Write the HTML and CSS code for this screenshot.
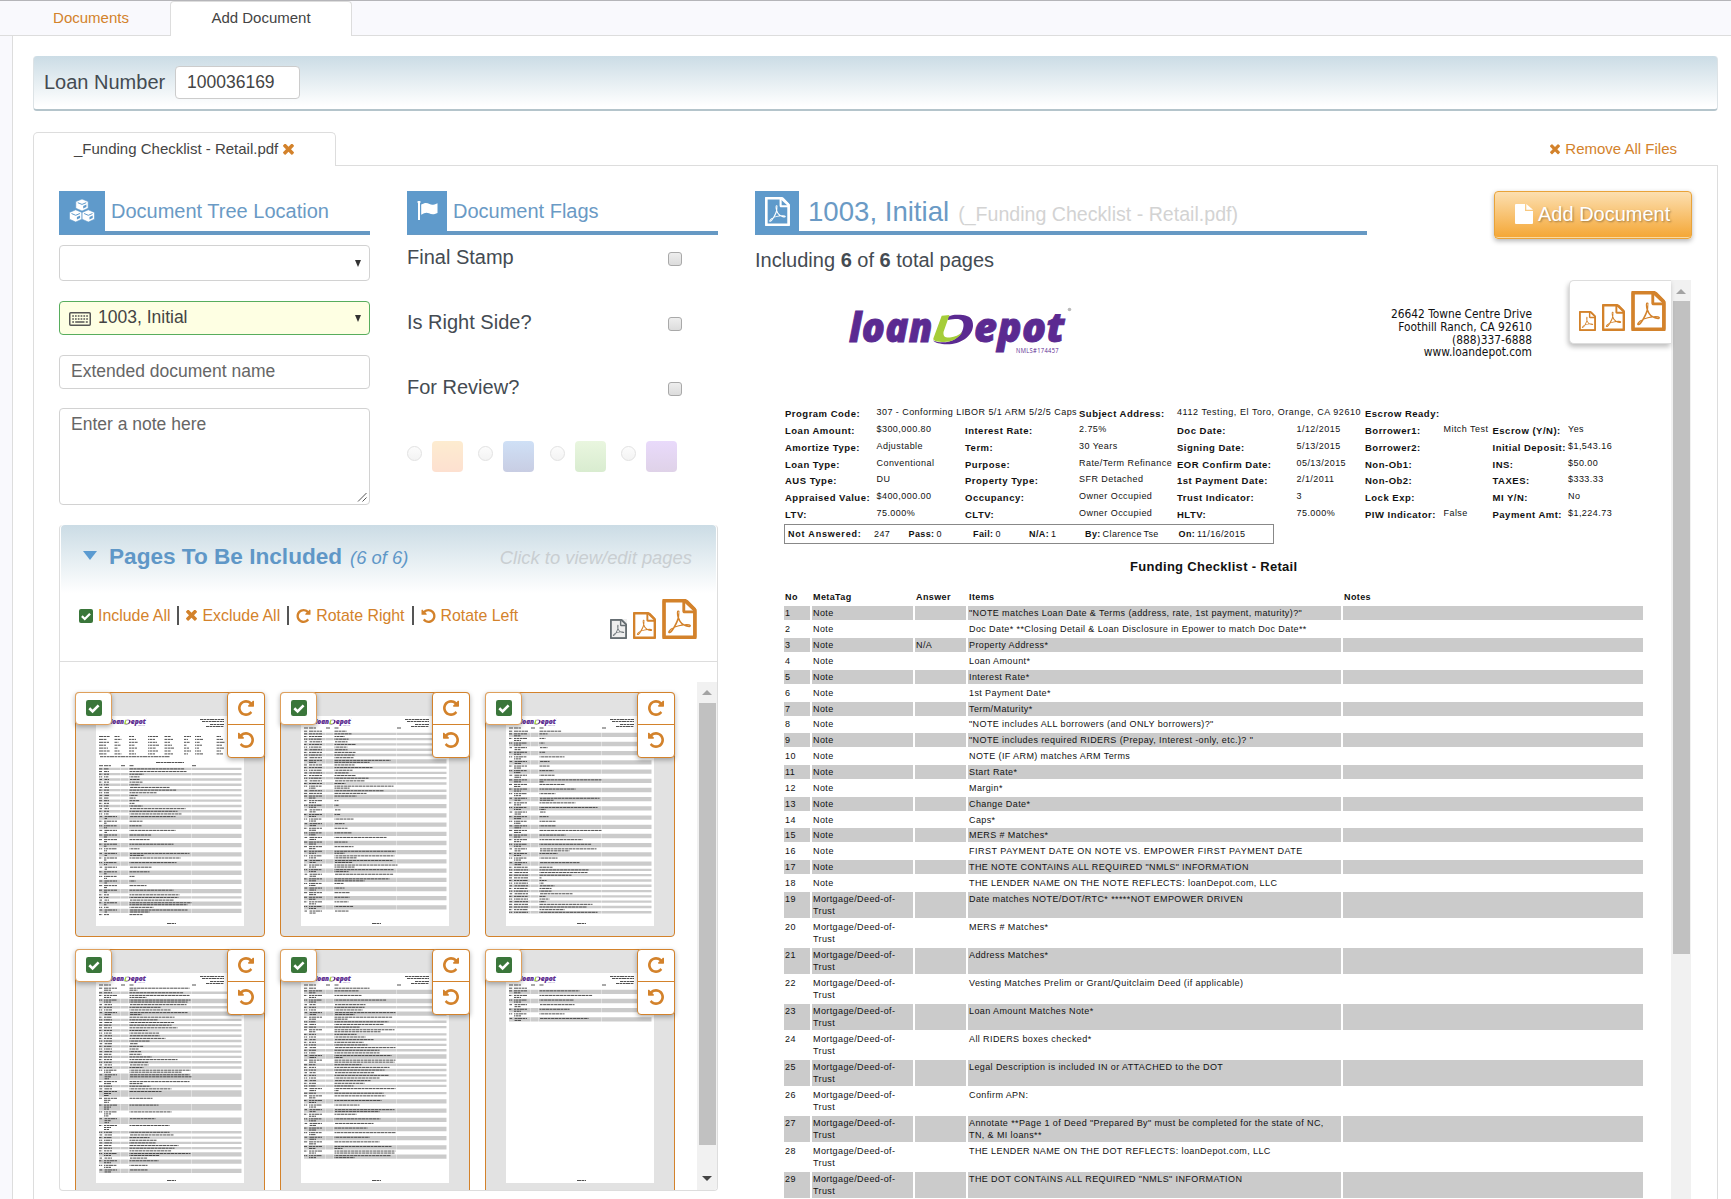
FILE: index.html
```html
<!DOCTYPE html>
<html lang="en">
<head>
<meta charset="utf-8">
<title>Add Document</title>
<link rel="stylesheet" href="styles.css">
</head>
<body>
<svg class="defs" width="0" height="0">
  <symbol id="pdf" viewBox="0 0 1536 1792"><path d="M1468 380q28 28 48 76t20 88v1152q0 40-28 68t-68 28H96q-40 0-68-28t-28-68V96q0-40 28-68T96 0h896q40 0 88 20t76 48zm-444-244v376h376q-10-29-22-41l-313-313q-12-12-41-22zm384 1528V640H992q-40 0-68-28t-28-68V128H128v1536h1280zm-514-593q33 26 84 56 59-7 117-7 147 0 177 49 16 22 2 52 0 1-1 2l-2 2v1q-6 38-71 38-48 0-115-20t-130-53q-221 24-392 83-153 262-242 262-15 0-28-7l-24-12q-1-1-6-5-10-10-6-36 9-40 56-91.500t132-96.500q14-9 23 6 2 2 2 4 52-85 107-197 68-136 104-262-24-82-30.500-159.500T657 552q11-40 42-40h22q23 0 35 15 18 21 9 68-2 6-4 8 1 3 1 8v30q-2 123-14 192 55 164 146 238zm-576 411q52-24 137-158-51 40-87.500 84t-49.500 74zm398-920q-15 42-2 132 1-7 7-44 0-3 7-43 1-4 4-8-1-1-1-2t-1-2q-1-22-13-36 0 1-1 2v2zm-124 661q135-54 284-81-2-1-13-9.500t-16-13.500q-76-67-127-176-27 86-83 197-30 56-45 83zm646-16q-24-24-140-24 76 28 124 28 14 0 18-1 0-1-2-3z"/><path d="M80 80h930l440 410v1222H80z" fill="none" stroke-width="150"/></symbol>
  <symbol id="times" viewBox="300 400 1192 1192"><path d="M1490 1322q0 40-28 68l-136 136q-28 28-68 28t-68-28l-294-294-294 294q-28 28-68 28t-68-28l-136-136q-28-28-28-68t28-68l294-294-294-294q-28-28-28-68t28-68l136-136q28-28 68-28t68 28l294 294 294-294q28-28 68-28t68 28l136 136q28 28 28 68t-28 68l-294 294 294 294q28 28 28 68z"/></symbol>
  <symbol id="rotate" viewBox="128 128 1536 1536"><path d="M1664 256v448q0 26-19 45t-45 19h-448q-42 0-59-40-17-39 14-69l138-138q-148-137-349-137-104 0-198.500 40.500t-163.500 109.500-109.500 163.500-40.500 198.500 40.500 198.500 109.500 163.500 163.500 109.500 198.500 40.500q119 0 225-52t179-147q7-10 23-12 15 0 25 9l137 138q9 8 9.500 20.500t-7.500 22.500q-109 132-264 204.500t-327 72.500q-156 0-298-61t-245-164-164-245-61-298 61-298 164-245 245-164 298-61q147 0 284.500 55.500t244.500 156.500l130-129q29-31 70-14 39 17 39 59z"/></symbol>
  <symbol id="check" viewBox="0 0 16 16"><rect width="16" height="16" rx="2.200" fill="#3a763a"/><path d="M3.300 8.200l3.300 3.200 6-6" fill="none" stroke="#fff" stroke-width="2.600"/></symbol>
  <symbol id="logo" viewBox="0 0 230 48">
    <g font-family="'Open Sans',sans-serif" font-weight="800" font-style="italic" font-size="41.500" fill="#5b2a91" stroke="#5b2a91" stroke-width=".9">
      <text x="4" y="37" textLength="84" lengthAdjust="spacingAndGlyphs">loan</text>
      <text x="129" y="37" textLength="91" lengthAdjust="spacingAndGlyphs">epot</text>
    </g>
    <path fill="#5b2a91" d="M103 12C106 9.500 112 9.500 118 10C125 11 128.300 14 128 21C127 32 115 39.500 102 39.300C95 39 90 38 88 35.500C93 37.500 99 38 104 36.500C113 34 118 28 118.500 21C119 16 116 13.500 110 14C107 14 104 15 103 15z"/>
    <path fill="#a5cd39" d="M96.700 10.700L104.500 10L98.500 27C98 32 101 33 105 32.500C110 32 114 30 117.500 27C113 34 106 37 99 37C93 37 87 36 88.500 33z"/>
    <text x="171" y="47.500" font-family="'Open Sans',sans-serif" font-size="6.500" fill="#5b2a91" textLength="43" lengthAdjust="spacingAndGlyphs">NMLS#174457</text>
    <circle cx="224.500" cy="4.500" r="1.800" fill="#bbb"/>
  </symbol>
</svg>

<nav class="tabs">
  <a class="tab">Documents</a>
  <a class="tab active">Add Document</a>
</nav>

<main class="main">
  <header class="loan-bar">
    <label>Loan Number</label>
    <div class="field loan-input">100036169</div>
  </header>

  <div class="file-tabs">
    <div class="file-tab">_Funding Checklist - Retail.pdf <svg class="x"><use href="#times"/></svg></div>
    <a class="remove"><svg class="x"><use href="#times"/></svg>Remove All Files</a>
  </div>

  <section class="panel">
    <div class="left">
      <div class="forms">
        <div class="col">
          <h2 class="head"><span class="head-icon cubes"><svg width="26" height="24" viewBox="0 0 26 24"><g fill="#fff" stroke="#5f9acb" stroke-width=".6"><path d="M13 0l6.200 2.600v6.600L13 12 6.800 9.200V2.600z"/><path d="M6.700 10.800l6.200 2.600v6.800L6.700 23 .5 20.200v-6.800z"/><path d="M19.300 10.800l6.200 2.600v6.800L19.300 23l-6.200-2.800v-6.800z"/></g><g fill="none" stroke="#5f9acb" stroke-width="1"><path d="M8.800 3.700L13 5.400l4.200-1.700M2.500 14.500l4.200 1.800 4.200-1.800M15.100 14.500l4.200 1.800 4.200-1.800"/></g><g fill="#5f9acb"><path d="M14.200 7l3.200-1.500v2.600l-3.200 1.500zM7.900 18l3.200-1.500v2.600L7.900 20.600zM20.500 18l3.200-1.500v2.600l-3.200 1.500z"/></g></svg></span>Document Tree Location</h2>
          <div class="field select first"><i class="arrow"></i></div>
          <div class="field select picked"><svg width="22" height="14" viewBox="0 0 22 14"><rect x=".75" y=".75" width="20.500" height="12.500" rx="1" fill="none" stroke="#555" stroke-width="1.500"/><g stroke="#555" stroke-width="1.500" stroke-dasharray="1.700 1.100"><path d="M3.200 4.100h15.800M3.200 7h15.800"/></g><path d="M3.200 10h1.800M6.200 10h9.300M16.800 10h2" stroke="#555" stroke-width="1.500"/></svg>1003, Initial<i class="arrow"></i></div>
          <div class="field name">Extended document name</div>
          <div class="field note">Enter a note here<svg class="grip" width="10" height="10"><path d="M1 9.500L9.500 1M5.500 9.500l4-4" stroke="#555"/></svg></div>
        </div>
        <div class="col">
          <h2 class="head"><span class="head-icon flag"><svg width="21" height="20" viewBox="0 0 21 20"><path d="M1 2.200a1.500 1.500 0 1 1 2 0V19H1z" fill="#fff"/><path d="M4.200 3.600C8 1.300 10 1.700 12.500 3s4 .8 8-.8v9.800c-4 2-6 1.500-8.500.3s-4.500-.7-7.800 1.500z" fill="#fff"/></svg></span>Document Flags</h2>
          <div class="flags">
            <div class="flag-row">Final Stamp<i class="box"></i></div>
            <div class="flag-row">Is Right Side?<i class="box"></i></div>
            <div class="flag-row">For Review?<i class="box"></i></div>
          </div>
          <div class="swatches">
            <i class="radio"></i><i class="swatch orange"></i>
            <i class="radio"></i><i class="swatch blue"></i>
            <i class="radio"></i><i class="swatch green"></i>
            <i class="radio"></i><i class="swatch purple"></i>
          </div>
        </div>
      </div>

      <div class="pages">
        <div class="pages-head"><i class="caret"></i><b>Pages To Be Included</b><em class="count">(6 of 6)</em><em class="hint">Click to view/edit pages</em></div>
        <div class="actions">
          <a><svg width="14" height="14"><use href="#check"/></svg>Include All</a><i class="bar"></i>
          <a><svg class="x"><use href="#times"/></svg>Exclude All</a><i class="bar"></i>
          <a><svg width="15" height="14"><use href="#rotate"/></svg>Rotate Right</a><i class="bar"></i>
          <a><svg class="flip" width="15" height="14"><use href="#rotate"/></svg>Rotate Left</a>
          <div class="sizes"><svg class="gray" width="17" height="20"><use href="#pdf"/></svg><svg width="23" height="27"><use href="#pdf"/></svg><svg width="35" height="40"><use href="#pdf"/></svg></div>
        </div>
        <div class="thumb-area">
          <div class="thumbs" id="thumbs"></div>
          <div class="scroll"><i class="up"></i><div class="scroll-thumb"></div><i class="down"></i></div>
        </div>
      </div>
    </div>

    <div class="right">
      <div class="right-head">
        <h1 class="head big"><span class="head-icon doc"><svg width="25" height="29"><use href="#pdf"/></svg></span>1003, Initial<small>(_Funding Checklist - Retail.pdf)</small></h1>
        <button class="add"><svg width="18" height="20" viewBox="0 0 18 20"><path d="M1 0h9v7h8v12q0 1-1 1H1q-1 0-1-1V1q0-1 1-1zM11.300 0L18 5.800h-6.700z" fill="#fff"/></svg>Add Document</button>
      </div>
      <p class="including">Including <b>6</b> of <b>6</b> total pages</p>
      <div class="viewer">
        <article class="doc">
          <div class="doc-top">
            <svg class="logo" width="230" height="48"><use href="#logo"/></svg>
            <address>26642 Towne Centre Drive<br>Foothill Ranch, CA 92610<br>(888)337-6888<br>www.loandepot.com</address>
          </div>
          <div class="facts">
            <b>Program Code:</b><span>307 - Conforming LIBOR 5/1 ARM 5/2/5 Caps</span><b></b><b>Subject Address:</b><span class="wide">4112 Testing, El Toro, Orange, CA 92610</span><span></span><b>Escrow Ready:</b><span></span><b></b><span></span>
            <b>Loan Amount:</b><span>$300,000.80</span><b>Interest Rate:</b><span>2.75%</span><b>Doc Date:</b><span>1/12/2015</span><b>Borrower1:</b><span>Mitch Test</span><b>Escrow (Y/N):</b><span>Yes</span>
            <b>Amortize Type:</b><span>Adjustable</span><b>Term:</b><span>30 Years</span><b>Signing Date:</b><span>5/13/2015</span><b>Borrower2:</b><span></span><b>Initial Deposit:</b><span>$1,543.16</span>
            <b>Loan Type:</b><span>Conventional</span><b>Purpose:</b><span>Rate/Term Refinance</span><b>EOR Confirm Date:</b><span>05/13/2015</span><b>Non-Ob1:</b><span></span><b>INS:</b><span>$50.00</span>
            <b>AUS Type:</b><span>DU</span><b>Property Type:</b><span>SFR Detached</span><b>1st Payment Date:</b><span>2/1/2011</span><b>Non-Ob2:</b><span></span><b>TAXES:</b><span>$333.33</span>
            <b>Appraised Value:</b><span>$400,000.00</span><b>Occupancy:</b><span>Owner Occupied</span><b>Trust Indicator:</b><span>3</span><b>Lock Exp:</b><span></span><b>MI Y/N:</b><span>No</span>
            <b>LTV:</b><span>75.000%</span><b>CLTV:</b><span>Owner Occupied</span><b>HLTV:</b><span>75.000%</span><b>PIW Indicator:</b><span>False</span><b>Payment Amt:</b><span>$1,224.73</span>
          </div>
          <div class="summary"><b>Not Answered:</b><span>247</span><span><b>Pass:</b> 0</span><span><b>Fail:</b> 0</span><span><b>N/A:</b> 1</span><span><b>By:</b> Clarence Tse</span><span><b>On:</b> 11/16/2015</span></div>
          <h3>Funding Checklist - Retail</h3>
          <div class="row th"><b>No</b><b>MetaTag</b><b>Answer</b><b>Items</b><b>Notes</b></div>
          <div class="row"><i>1</i><i>Note</i><i></i><i>"NOTE matches Loan Date &amp; Terms (address, rate, 1st payment, maturity)?"</i><i></i></div>
          <div class="row"><i>2</i><i>Note</i><i></i><i>Doc Date* **Closing Detail &amp; Loan Disclosure in Epower to match Doc Date**</i><i></i></div>
          <div class="row"><i>3</i><i>Note</i><i>N/A</i><i>Property Address*</i><i></i></div>
          <div class="row"><i>4</i><i>Note</i><i></i><i>Loan Amount*</i><i></i></div>
          <div class="row"><i>5</i><i>Note</i><i></i><i>Interest Rate*</i><i></i></div>
          <div class="row"><i>6</i><i>Note</i><i></i><i>1st Payment Date*</i><i></i></div>
          <div class="row"><i>7</i><i>Note</i><i></i><i>Term/Maturity*</i><i></i></div>
          <div class="row"><i>8</i><i>Note</i><i></i><i>"NOTE includes ALL borrowers (and ONLY borrowers)?"</i><i></i></div>
          <div class="row"><i>9</i><i>Note</i><i></i><i>"NOTE includes required RIDERS (Prepay, Interest -only, etc.)? "</i><i></i></div>
          <div class="row"><i>10</i><i>Note</i><i></i><i>NOTE (IF ARM) matches ARM Terms</i><i></i></div>
          <div class="row"><i>11</i><i>Note</i><i></i><i>Start Rate*</i><i></i></div>
          <div class="row"><i>12</i><i>Note</i><i></i><i>Margin*</i><i></i></div>
          <div class="row"><i>13</i><i>Note</i><i></i><i>Change Date*</i><i></i></div>
          <div class="row"><i>14</i><i>Note</i><i></i><i>Caps*</i><i></i></div>
          <div class="row"><i>15</i><i>Note</i><i></i><i>MERS # Matches*</i><i></i></div>
          <div class="row caps"><i>16</i><i>Note</i><i></i><i>FIRST PAYMENT DATE ON NOTE VS. EMPOWER FIRST PAYMENT DATE</i><i></i></div>
          <div class="row"><i>17</i><i>Note</i><i></i><i>THE NOTE CONTAINS ALL REQUIRED "NMLS" INFORMATION</i><i></i></div>
          <div class="row"><i>18</i><i>Note</i><i></i><i>THE LENDER NAME ON THE NOTE REFLECTS: loanDepot.com, LLC</i><i></i></div>
          <div class="row two"><i>19</i><i>Mortgage/Deed-of-<br>Trust</i><i></i><i>Date matches NOTE/DOT/RTC* *****NOT EMPOWER DRIVEN</i><i></i></div>
          <div class="row two"><i>20</i><i>Mortgage/Deed-of-<br>Trust</i><i></i><i>MERS # Matches*</i><i></i></div>
          <div class="row two"><i>21</i><i>Mortgage/Deed-of-<br>Trust</i><i></i><i>Address Matches*</i><i></i></div>
          <div class="row two"><i>22</i><i>Mortgage/Deed-of-<br>Trust</i><i></i><i>Vesting Matches Prelim or Grant/Quitclaim Deed (if applicable)</i><i></i></div>
          <div class="row two"><i>23</i><i>Mortgage/Deed-of-<br>Trust</i><i></i><i>Loan Amount Matches Note*</i><i></i></div>
          <div class="row two"><i>24</i><i>Mortgage/Deed-of-<br>Trust</i><i></i><i>All RIDERS boxes checked*</i><i></i></div>
          <div class="row two"><i>25</i><i>Mortgage/Deed-of-<br>Trust</i><i></i><i>Legal Description is included IN or ATTACHED to the DOT</i><i></i></div>
          <div class="row two"><i>26</i><i>Mortgage/Deed-of-<br>Trust</i><i></i><i>Confirm APN:</i><i></i></div>
          <div class="row two"><i>27</i><i>Mortgage/Deed-of-<br>Trust</i><i></i><i>Annotate **Page 1 of Deed "Prepared By" must be completed for the state of NC,<br>TN, &amp; MI loans**</i><i></i></div>
          <div class="row two"><i>28</i><i>Mortgage/Deed-of-<br>Trust</i><i></i><i>THE LENDER NAME ON THE DOT REFLECTS: loanDepot.com, LLC</i><i></i></div>
          <div class="row two"><i>29</i><i>Mortgage/Deed-of-<br>Trust</i><i></i><i>THE DOT CONTAINS ALL REQUIRED "NMLS" INFORMATION</i><i></i></div>
        </article>
        <div class="zoombox"><svg width="17" height="20"><use href="#pdf"/></svg><svg width="23" height="27"><use href="#pdf"/></svg><svg width="35" height="40"><use href="#pdf"/></svg></div>
        <div class="scroll doc-scroll"><i class="up"></i><div class="scroll-thumb"></div></div>
      </div>
    </div>
  </section>
</main>
<script src="thumbs.js"></script>
</body>
</html>
```
FILE: thumbs.js
```js
// Page miniatures. Each row is "<lines>:<item text width>", optionally "/<second line width>".
// "tag" is the width of the tag column's text on single-line rows.
const pages = [
  { top: 51.7, facts: true, tag: 5, rows: '1:55 1:57 1:14 1:10 1:10 1:13 1:10 1:40 1:47 1:27 1:8 1:6 1:10 1:5 1:13 1:56 1:48 1:52 2:46 2:13 2:12 2:46 2:22 2:20 2:44 2:10 2:60/14 2:51 2:47 2:22 2:20 2:5 2:6 2:17 2:44 1:50 1:49 1:44 2:62/58 1:24 2:58/20 1:13' },
  { top: 14, tag: 13, rows: '1:12 1:17 1:10 1:14 1:13 1:21 1:13 1:13 1:21 1:20 1:19 2:56/35 1:20 1:38 1:18 1:14 1:21 1:34 1:30 1:11 2:59/15 1:49 1:32 2:22 2:4 2:4 2:6 2:6 2:19 2:10 2:13 2:17 2:52 2:13 2:19 2:61/10 2:60/22 2:58/18 2:63/20 2:59/14 2:59 2:55/30 2:9 2:10 2:15 2:15 2:14 2:19 2:14' },
  { top: 14, tag: 14, rows: '1:22 2:8 2:6 2:5 2:8 2:6 2:25 2:10 2:10 2:14 2:15 2:62/4 2:25 2:36 2:16 2:60/14 2:36 2:58/6 2:6 2:9 2:16 2:16 2:62 2:26 2:43 2:52 2:57/30 2:18 2:18 2:40 1:13 1:49 1:48 1:32 1:2 1:7 1:4 1:15 1:12 1:12 1:33 1:6 1:10 1:6 1:53 1:47 1:25 1:58' },
  { top: 14, tag: 8, rows: '2:60/8 1:54 2:60/17 2:61/58 1:57 1:31 1:41 2:58/12 1:45 1:28 1:45 1:42 1:48 1:18 1:30 1:30 1:36 1:20 1:8 1:14 1:9 1:12 1:12 1:22 1:48 1:19 1:19 1:14 2:61/52 3:60/62 2:60/13 1:21 1:42 3:32 3:23 3:29 3:42 3:26 3:40 1:40 1:44 1:20 1:27 1:26 1:49 1:45 1:42 2:61/30 1:18 2:29 2:18 2:18' },
  { top: 14, tag: 7, rows: '1:35 2:24 2:27 2:52 1:31 1:30 1:28 2:61/20 2:58/13 1:54 1:49 1:25 2:60/46 1:22 1:31 1:39 1:29 1:33 1:61 1:45 1:45 2:57/8 2:61/60 1:27 1:55 1:50 1:40 1:54 1:45 1:36 1:30 1:19 2:61/4 1:49 2:51 2:47 2:25 2:60/45 2:22 2:46 2:39 2:33 2:61 2:35 2:45 2:57/8 2:61/60 2:56/20' },
  { top: 14, tag: 13, rows: '1:0 2:40 2:53 2:34 2:35 2:30 2:25 2:49' }
];

function ink(x, y, w, phase) {
  return `<path d="M${x} ${y}h${w}" stroke-dashoffset="${phase}"/>`;
}

function drawPage(page) {
  let gray = '', text = '', y = page.top;
  for (const x of [3, 8, 25, 33.5, 96]) text += ink(x, y - 2, x === 8 ? 7 : 4, 0);
  page.rows.split(' ').forEach((r, i) => {
    const [lines, widths] = r.split(':');
    const h = lines === '1' ? 2.65 : lines === '2' ? 4.6 : 6.8;
    if (y + h > 202) return;
    if (i % 2 === (page.facts ? 0 : 1)) gray += `<path d="M3 ${y}h142.500v${h - .3}H3z"/>`;
    const w = widths.split('/');
    text += ink(3, y + 1.2, 3.2, i) + ink(8, y + 1.2, lines === '1' ? page.tag : 13, i);
    if (+lines > 1) text += ink(8, y + 3.2, page.facts ? 3 : 7, i);
    if (+lines > 2) text += ink(8, y + 5.2, 5, i);
    text += ink(33.5, y + 1.2, w[0], i);
    if (w[1]) text += ink(33.5, y + 3.2, w[1], i);
    y += h;
  });
  let extra = '';
  if (page.facts) {
    for (let r = 0; r < 7; r++)
      [[3, 11], [18.5, 7], [33, 9], [52, 11], [68, 10], [88, 7], [99, 8], [120, 9]].forEach(([x, w], c) => {
        extra += ink(x, 20.5 + r * 2.9, w - (r * 3 + c * 2) % 5, c);
      });
    extra += ink(4, 40.7, 70, 1) + ink(60, 46.5, 28, 0);
  }
  [[104, 24, 3.5], [106, 22, 5.5], [114, 14, 8.5], [110, 18, 10.5]].forEach(([x, w, yy]) => { extra += ink(x, yy, w, 1); });
  return `<svg class="sheet" width="148" height="210" viewBox="0 0 148 210">
    <rect width="148" height="210" fill="#fff"/><g fill="#cbcbcb">${gray}</g>
    <path d="M24.500 ${page.top}V202M32.500 ${page.top}V202M95.500 ${page.top}V202" stroke="#fff" stroke-width=".4"/>
    <g class="ink">${text}${extra}${ink(71, 207.5, 9, 0)}</g>
    <use href="#logo" x="13.500" y="2" width="38" height="8"/></svg>`;
}

document.getElementById('thumbs').innerHTML = pages.map(p => `
  <div class="thumb">${drawPage(p)}
    <div class="tick"><svg width="16" height="16"><use href="#check"/></svg></div>
    <div class="turns"><span><svg width="16" height="16"><use href="#rotate"/></svg></span><span><svg class="flip" width="16" height="16"><use href="#rotate"/></svg></span></div>
  </div>`).join('');
```
FILE: styles.css
```css
* { box-sizing: border-box; }
body { margin: 0; width: 1731px; height: 1199px; overflow: hidden; background: #f9f9fd; border-top: 1px solid #b5b5b9; font-family: "Liberation Sans", Arial, sans-serif; color: #444b52; }
h1, h2, h3, p { margin: 0; font-weight: normal; }
i { font-style: normal; }
svg { flex: none; }
.defs { position: absolute; }
a { color: #d3822b; }
.x { width: 11px; height: 11px; fill: #d3822b; }
.flip { transform: scaleX(-1); }

.tabs { display: flex; height: 35px; padding-left: 12px; font-size: 15px; line-height: 33px; box-shadow: inset 0 -1px #ddd; }
.tab { width: 158px; text-align: center; }
.tab.active { width: 182px; color: #444; background: #fff; border: 1px solid #ddd; border-bottom: 0; border-radius: 4px 4px 0 0; line-height: 32px; }
.main { margin-left: 12px; height: 1164px; background: #fff; border-left: 1px solid #ddd; padding: 20px 13px 0 20px; }

.loan-bar { display: flex; align-items: flex-start; width: 1685px; height: 55px; padding: 10px 10px; background: linear-gradient(#cbdce5, #fff 95%); border: 1px solid #dde3e6; border-top: 0; border-bottom: 2px solid #b4c4cb; border-radius: 4px; font-size: 20px; }
.loan-bar label { width: 131px; line-height: 33px; }
.field { background: #fff; border: 1px solid #d2d2d2; border-radius: 4px; font-size: 17.500px; }
.loan-input { width: 125px; height: 33px; padding-left: 11px; line-height: 31px; border-color: #ccc; color: #444; }

.file-tabs { display: flex; justify-content: space-between; height: 34px; margin-top: 21px; width: 1685px; box-shadow: inset 0 -1px #ddd; font-size: 15px; }
.file-tab { width: 303px; height: 34px; padding-left: 40px; line-height: 32px; background: #fff; border: 1px solid #ddd; border-bottom: 0; border-radius: 5px 5px 0 0; color: #444; white-space: nowrap; }
.file-tab .x { margin-left: 1px; vertical-align: -1px; }
.remove { padding-right: 41px; line-height: 33px; }
.remove .x { width: 10px; margin-right: 5px; vertical-align: -1px; }
.panel { display: flex; width: 1685px; height: 1034px; border: 1px solid #ddd; border-width: 0 1px; padding: 25px 0 0 25px; }
.left { width: 659px; margin-right: 37px; }
.forms { display: flex; gap: 37px; height: 334px; }
.col { width: 311px; }

.head { display: flex; height: 44px; border-bottom: 4px solid #6699c4; color: #6a9ac5; font-size: 20px; line-height: 40px; white-space: nowrap; }
.head-icon { display: flex; align-items: center; justify-content: center; height: 43px; margin-right: 6px; background: #5f9acb; padding-bottom: 3px; }
.cubes { width: 46px; }
.flag { width: 40px; }
.doc { fill: #fff; }
.head-icon.doc { width: 44px; margin-right: 9px; }
.select { display: flex; align-items: center; position: relative; height: 34px; padding: 0 8px 1px 9px; }
.select svg { margin: 2px 7px 0 0; }
.select.first { height: 36px; margin: 10px 0 20px; }
.picked { background: #feffe3; border-color: #57ad5d; color: #444; }
.arrow { margin-left: auto; border: 3.500px solid transparent; border-top: 7px solid #333; border-bottom: 0; margin-top: 2px; }
.name { height: 34px; margin: 20px 0 19px; padding-left: 11px; line-height: 31px; color: #666; }
.note { position: relative; height: 97px; padding: 5px 11px; line-height: 20px; color: #666; }
.grip { position: absolute; right: 2px; bottom: 2px; }

.flags { font-size: 20px; }
.flag-row { display: flex; justify-content: space-between; height: 65px; padding-right: 36px; line-height: 45px; }
.box { width: 14px; height: 14px; margin-top: 17px; border: 1px solid #a9a9a9; border-radius: 3px; background: linear-gradient(#eee, #dcdcdc); }
.swatches { display: flex; align-items: flex-start; margin-top: 11px; }
.radio { width: 15px; height: 15px; margin: 5px 10px 0 0; border: 1px solid #e2e2e2; border-radius: 50%; background: linear-gradient(#fcfcfc, #f3f3f3); }
.swatch { width: 31px; height: 31px; margin-right: 15.300px; border-radius: 4px; }
.orange { background: linear-gradient(#fdecd0, #fde0d0); }
.blue { background: linear-gradient(#cfe0f6, #c8cde3); }
.green { background: linear-gradient(#e9f6df, #d9ecd0); }
.purple { background: linear-gradient(#e9dafb, #dfd2e8); }

.pages { width: 659px; height: 666px; border: 1px solid #ddd; border-top: 0; border-radius: 4px; overflow: hidden; }
.pages-head { display: flex; align-items: baseline; height: 68px; padding: 18px 24px 0 22px; margin: 0 1px; border-radius: 4px 4px 0 0; background: linear-gradient(#cbdce5, #fff); color: #5f97c7; font-size: 22.600px; line-height: 27px; white-space: nowrap; }
.caret { border: 7.500px solid transparent; border-top: 9px solid #5b9bd1; border-bottom: 0; margin-right: 12px; transform: translateY(-4px); }
.count { margin-left: 8px; font-size: 18.400px; }
.hint { margin-left: auto; font-size: 18.400px; color: #c9ced1; }
.actions { display: flex; align-items: flex-start; height: 69px; padding: 12px 20px 0 19px; border-bottom: 1px solid #ddd; font-size: 15.900px; line-height: 21px; fill: #d3822b; white-space: nowrap; }
.actions a { display: flex; align-items: center; height: 21px; }
.actions a svg { margin-right: 5px; }
.actions a .x { margin-right: 5px; }
.bar { width: 2px; height: 19px; margin: 1px 7px; background: #555; }
.sizes { display: flex; align-items: flex-end; gap: 6px; height: 40px; margin: -6px 0 0 auto; stroke: #d3822b; }
.gray { fill: #666e73; stroke: #666e73; background: #eee; }
.thumb-area { display: flex; height: 528px; padding-top: 20px; justify-content: space-between; }
.thumbs { display: grid; grid-template-columns: repeat(3, 190px); grid-auto-rows: 245px; gap: 12px 15px; padding: 10px 0 0 15px; }
.thumb { position: relative; padding: 23px 20px; background: #e2e2e2; border: 1px solid #d3822b; border-radius: 4px; }
.sheet { display: block; }
.ink path { fill: none; stroke: #333; stroke-width: .85; stroke-dasharray: 4 .5 2.500 .6 3 .4; }
.tick, .turns { position: absolute; top: -1px; background: #fff; border: 1px solid #d3822b; border-radius: 4px; box-shadow: 0 2px 5px rgba(0,0,0,.3); fill: #d3822b; }
.tick { left: -1px; width: 37px; height: 33px; padding-bottom: 1px; display: flex; align-items: center; justify-content: center; border-color: #dfa05c; }
.turns { right: -1px; width: 38px; height: 66px; }
.turns span { display: flex; align-items: center; justify-content: center; height: 31px; padding-bottom: 2px; }
.turns span + span { height: 33px; border-top: 1px solid #d3822b; }
.scroll { display: flex; flex-direction: column; align-items: center; width: 20px; height: 508px; background: #f1f1f1; }
.scroll-thumb { width: 17px; height: 442px; background: #c1c1c1; }
.up { border: 5px solid transparent; border-bottom: 5px solid #a3a3a3; border-top: 0; margin: 8px 0; }
.down { border: 5px solid transparent; border-top: 5px solid #444; border-bottom: 0; margin: auto 0 9px; }

.right { width: 937px; }
.right-head { display: flex; justify-content: space-between; }
.big { width: 612px; font-size: 27.600px; line-height: 41px; stroke: #fff; }
.big small { margin-left: 9px; font-size: 19.600px; line-height: 46px; color: #d3d3d3; }
.big { stroke-width: 0; }
.add { display: flex; align-items: center; width: 198px; height: 48px; padding: 0 0 2px 20px; gap: 5px; border: 1px solid #e9a339; border-radius: 4px; background: linear-gradient(#fcdfb0, #f4a634); box-shadow: 0 2px 5px rgba(0,0,0,.3), inset 0 -2px 0 -1px #fbd9a0; color: #fff; font: 20px "Liberation Sans", Arial, sans-serif; text-shadow: 1px 1px 2px rgba(0,0,0,.35); white-space: nowrap; }
.including { height: 41px; font-size: 20px; line-height: 42px; }
.viewer { position: relative; display: flex; height: 919px; overflow: hidden; }
.doc-scroll { height: 919px; width: 20px; }
.doc-scroll .up { margin-top: 9px; margin-bottom: 7px; }
.doc-scroll .scroll-thumb { height: 653px; }
article.doc { width: 916px; padding-left: 29px; font-size: 9px; letter-spacing: .4px; color: #111; fill: initial; }
.doc-top { display: flex; height: 125px; }
.logo { margin: 25px 0 0 61px; }
address { flex: 1; margin: 28px 139px 0 0; font: normal 11.850px/12.800px "DejaVu Sans Condensed", "DejaVu Sans", sans-serif; letter-spacing: 0; text-align: right; }
.facts { display: grid; grid-template-columns: 91.500px 88.500px 114px 98px 119.500px 68.500px 78.500px 49px 75.500px 80px; grid-auto-rows: 16.850px; margin-left: 1px; line-height: 17px; white-space: nowrap; font-size: 9px; }
.facts b { font-size: 9.500px; letter-spacing: .5px; }
.facts span { line-height: 15px; letter-spacing: .45px; }
.facts .wide { letter-spacing: .55px; }
.summary { display: grid; grid-template-columns: 86px 34.500px 64.500px 56px 56px 93.500px auto; align-items: center; width: 490px; height: 20px; margin: 1px 0 0; padding: 1px 0 0 3px; border: 1px solid #888; white-space: nowrap; }
.summary > b { letter-spacing: .8px; }
.summary span { word-spacing: -1px; }
h3 { margin: 13px 0 0 346px; font-weight: bold; font-size: 13px; line-height: 20px; letter-spacing: .3px; }
.row { display: grid; grid-template-columns: 26px 101px 51px 373px 300px; column-gap: 2px; height: 15.860px; padding-bottom: 1.860px; line-height: 14px; white-space: nowrap; }
.row i, .row b { padding-left: 1px; }
.row.caps { letter-spacing: .5px; }
.row.two { height: 28px; padding-bottom: 2px; line-height: 12px; padding-top: 0; }
.row.two i { padding-top: 1px; }
.row:nth-of-type(odd) i { background: #cbcbcb; }
.row.th { height: 29.500px; padding-top: 13px; }
.row.th b { margin-bottom: 1px; }
.zoombox { position: absolute; top: 0; right: 21px; display: flex; align-items: flex-end; gap: 6px; width: 102px; height: 64px; padding: 0 0 12px 9px; background: #fff; border: 1px solid #ddd; border-right: 0; border-radius: 5px 0 0 5px; box-shadow: -1px 3px 5px rgba(0,0,0,.25); fill: #d3822b; stroke: #d3822b; }
```
